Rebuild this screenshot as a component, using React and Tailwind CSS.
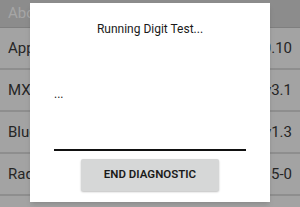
export default function App() {
  const rows = [
    { label: 'App Version', value: '1.0.10' },
    { label: 'MXT Version', value: 'v3.1' },
    { label: 'Bluetooth Version', value: 'v1.3' },
    { label: 'Radio Version', value: '1.5-0' },
  ]

  return (
    <div className="relative w-[300px] h-[207px] overflow-hidden bg-[#a3a3a3]" style={{ fontFamily: 'Roboto, "Noto Sans", sans-serif' }}>
      {/* Background list (dimmed behind the dialog) */}
      <div className="flex flex-col">
        <div className="h-[28px] flex items-center px-2 bg-[#8c8c8c] border-b border-[#7f7f7f]">
          <span className="text-[15px] text-[#a6a6a6]">About</span>
        </div>
        {rows.map(r => (
          <div key={r.label} className="h-[42px] flex items-center justify-between px-2 border-b-2 border-[#8e8e8e]">
            <span className="text-[15px] text-[#262626]">{r.label}</span>
            <span className="text-[15px] text-[#262626]">{r.value}</span>
          </div>
        ))}
      </div>

      {/* Dialog */}
      <div className="absolute left-[30px] top-[3px] w-[240px] h-[199px] bg-white flex flex-col items-center pt-[18px] shadow-md">
        <div className="text-[12px] leading-[16px] text-[#1a1a1a]">Running Digit Test...</div>
        <div className="mt-[49px] w-[192px] h-[65px] border-b-2 border-[#111]">
          <p className="text-[12px] leading-[16px] text-[#1a1a1a]">...</p>
        </div>
        <button className="mt-[8px] w-[138px] h-[32px] bg-[#d6d7d7] rounded-[2px] shadow-[0_1px_2px_rgba(0,0,0,0.25)] text-[11.5px] font-semibold text-[#1a1a1a]">
          END DIAGNOSTIC
        </button>
      </div>
    </div>
  )
}
